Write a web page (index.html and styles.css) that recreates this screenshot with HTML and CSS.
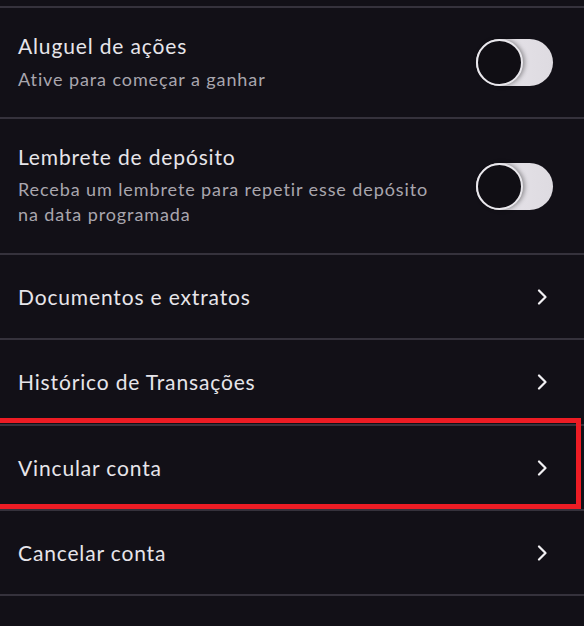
FILE: index.html
```html
<!DOCTYPE html>
<html lang="pt-BR">
<head>
<meta charset="utf-8">
<title>Configurações</title>
<link rel="stylesheet" href="styles.css">
</head>
<body>
<div class="list">
  <div class="row row-toggle row-a">
    <div class="texts">
      <div class="title">Aluguel de ações</div>
      <div class="sub">Ative para começar a ganhar</div>
    </div>
    <div class="toggle"><span class="knob"></span></div>
  </div>
  <div class="row row-toggle row-b">
    <div class="texts">
      <div class="title">Lembrete de depósito</div>
      <div class="sub">Receba um lembrete para repetir esse depósito<br>na data programada</div>
    </div>
    <div class="toggle"><span class="knob"></span></div>
  </div>
  <div class="row row-link">
    <div class="title">Documentos e extratos</div>
    <svg class="chev" width="12" height="16" viewBox="0 0 12 16"><path d="M3 1.5 L9.5 8 L3 14.5" fill="none" stroke="#f2f1f4" stroke-width="2.2" stroke-linecap="round" stroke-linejoin="round"/></svg>
  </div>
  <div class="row row-link row-tall">
    <div class="title">Histórico de Transações</div>
    <svg class="chev" width="12" height="16" viewBox="0 0 12 16"><path d="M3 1.5 L9.5 8 L3 14.5" fill="none" stroke="#f2f1f4" stroke-width="2.2" stroke-linecap="round" stroke-linejoin="round"/></svg>
  </div>
  <div class="row row-link highlighted">
    <div class="title">Vincular conta</div>
    <svg class="chev" width="12" height="16" viewBox="0 0 12 16"><path d="M3 1.5 L9.5 8 L3 14.5" fill="none" stroke="#f2f1f4" stroke-width="2.2" stroke-linecap="round" stroke-linejoin="round"/></svg>
    <div class="redbox"></div>
  </div>
  <div class="row row-link row-last">
    <div class="title">Cancelar conta</div>
    <svg class="chev" width="12" height="16" viewBox="0 0 12 16"><path d="M3 1.5 L9.5 8 L3 14.5" fill="none" stroke="#f2f1f4" stroke-width="2.2" stroke-linecap="round" stroke-linejoin="round"/></svg>
  </div>
</div>
</body>
</html>
```
FILE: styles.css
```css
html, body {
  margin: 0;
  padding: 0;
  background: #121017;
}
body {
  width: 584px;
  height: 626px;
  overflow: hidden;
  font-family: Lato, "Noto Sans", sans-serif;
}
.list {
  padding-top: 6px;
}
.row {
  box-sizing: border-box;
  border-top: 2px solid #35323c;
  display: flex;
  align-items: center;
  justify-content: space-between;
  padding: 0 31px 0 18px;
  position: relative;
}
.row-a { height: 111px; }
.row-b { height: 136px; }
.row-link { height: 85px; padding-right: 36px; }
.row-tall { height: 86px; }
.row-last { border-bottom: 2px solid #35323c; height: 87px; }
.texts {
  display: flex;
  flex-direction: column;
}
.title {
  color: #e7e5ea;
  font-size: 21px;
  line-height: 24px;
  letter-spacing: 0.85px;
}
.sub {
  color: #a9a6ae;
  font-size: 18px;
  line-height: 25px;
  letter-spacing: 0.9px;
  margin-top: 9px;
}
.row-b .sub { margin-top: 8px; }
.row-toggle { padding-right: 31px; }
.toggle {
  position: relative;
  width: 77px;
  height: 47px;
  border-radius: 24px;
  background: linear-gradient(90deg, #d6d3da 0%, #e2dfe5 60%, #dedbe1 100%);
  flex: none;
}
.knob {
  position: absolute;
  left: 0;
  top: 0;
  box-sizing: border-box;
  width: 47px;
  height: 47px;
  border-radius: 50%;
  background: #100e14;
  border: 2px solid #e9e7ec;
  box-shadow: 2px 0 4px rgba(0,0,0,0.35);
}
.chev {
  flex: none;
}
.redbox {
  position: absolute;
  left: -10px;
  right: 3px;
  top: -8px;
  bottom: 0;
  border: 5px solid #ed1c24;
  pointer-events: none;
}
```
